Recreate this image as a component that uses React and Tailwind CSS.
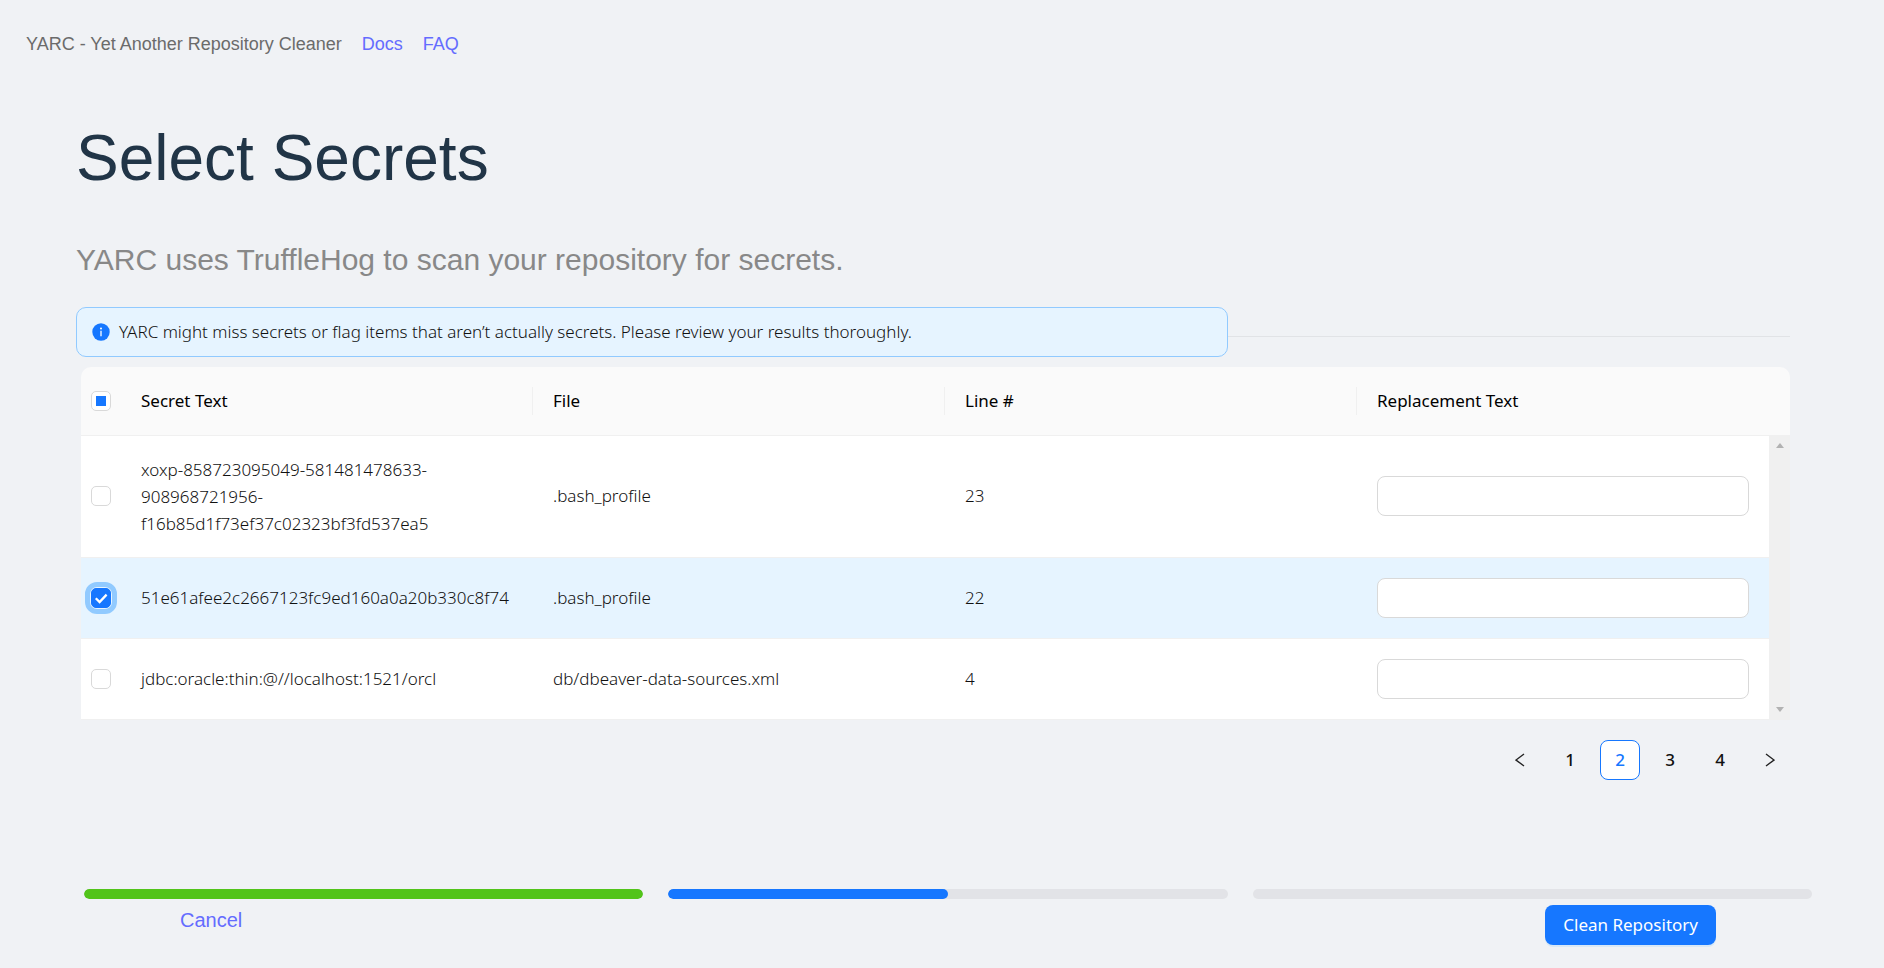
import { useState } from "react";

const rows = [
  {
    id: 1,
    secret: ["xoxp-858723095049-581481478633-", "908968721956-", "f16b85d1f73ef37c02323bf3fd537ea5"],
    file: ".bash_profile",
    line: 23,
  },
  { id: 2, secret: ["51e61afee2c2667123fc9ed160a0a20b330c8f74"], file: ".bash_profile", line: 22 },
  { id: 3, secret: ["jdbc:oracle:thin:@//localhost:1521/orcl"], file: "db/dbeaver-data-sources.xml", line: 4 },
];

const pages = [1, 2, 3, 4];

function Checkbox({ label, checked, partial, focused, onChange }) {
  return (
    <label
      className={
        "relative mx-auto block size-5 rounded-md " +
        (focused ? "outline-[5px] outline-offset-1 outline-[#91caff]" : "")
      }
    >
      <input
        type="checkbox"
        aria-label={label}
        checked={checked}
        onChange={onChange}
        className="block size-5 appearance-none rounded-[5px] border border-[#d9d9d9] bg-white outline-none checked:border-[#1677ff] checked:bg-[#1677ff]"
      />
      {partial && <span className="pointer-events-none absolute inset-[5px] bg-[#1677ff]" />}
      {checked && (
        <svg viewBox="0 0 20 20" className="pointer-events-none absolute inset-0 size-5" fill="none" stroke="#fff" strokeWidth="2.3">
          <path d="M4.8 10.2 L8.6 14 L15.6 6.6" />
        </svg>
      )}
    </label>
  );
}

function HeadCell({ children, divider }) {
  return (
    <th scope="col" className="h-[68px] border-b border-[#f0f0f0] p-0 text-left font-normal text-black">
      <div className={"flex h-7 items-center px-5 " + (divider ? "border-r border-[#f0f0f0]" : "")}>{children}</div>
    </th>
  );
}

function Arrow({ up }) {
  return (
    <button type="button" aria-label={up ? "Scroll up" : "Scroll down"} className="flex h-[21px] items-center justify-center">
      <svg width="8" height="5" viewBox="0 0 8 5" fill="#b2b2b2">
        <path d={up ? "M4 0 L8 5 H0 Z" : "M0 0 H8 L4 5 Z"} />
      </svg>
    </button>
  );
}

function Chevron({ flip }) {
  return (
    <svg width="10" height="14" viewBox="0 0 10 14" fill="none" stroke="#222" strokeWidth="1.4">
      <path d={flip ? "M1 1 L9 7 L1 13" : "M9 1 L1 7 L9 13"} />
    </svg>
  );
}

function Progress({ label, value, color }) {
  return (
    <div
      role="progressbar"
      aria-label={label}
      aria-valuenow={value}
      className="h-2.5 flex-1 overflow-hidden rounded-full bg-[#e2e3e7]"
    >
      <div className={"h-full rounded-full " + color} style={{ width: `${value}%` }} />
    </div>
  );
}

export default function App() {
  const [selected, setSelected] = useState([2]);
  const [page, setPage] = useState(2);

  const toggle = (id) =>
    setSelected((s) => (s.includes(id) ? s.filter((x) => x !== id) : [...s, id]));
  const all = selected.length === rows.length;

  return (
    <div className="min-h-screen bg-[#f0f2f5] font-['Noto_Sans',sans-serif] text-[17px] leading-6 font-light text-[#111]">
      <nav className="flex h-[88px] items-center gap-5 px-[26px] font-['Liberation_Sans',sans-serif] text-lg text-[#6b6b6b]">
        <span>YARC - Yet Another Repository Cleaner</span>
        <a href="#docs" className="text-[#646cff]">Docs</a>
        <a href="#faq" className="text-[#646cff]">FAQ</a>
      </nav>

      <main className="pr-[94px] pl-[76px]">
        <header className="font-['Liberation_Sans',sans-serif]">
          <h1 className="pt-8 text-[64px] leading-[76px] text-[#213547]">Select Secrets</h1>
          <h2 className="mt-[44px] text-[30px] leading-10 text-[#888]">
            YARC uses TruffleHog to scan your repository for secrets.
          </h2>
        </header>

        <div className="mt-[27px] flex items-center">
          <div role="alert" className="flex h-[50px] w-[1152px] items-center gap-[9px] rounded-[10px] border border-[#91caff] bg-[#e6f4ff] px-[15px]">
            <svg width="18" height="18" viewBox="0 0 18 18">
              <circle cx="9" cy="9" r="8.7" fill="#1677ff" />
              <circle cx="9" cy="5.4" r="1" fill="#fff" />
              <path d="M9 7.8 V13.2" stroke="#fff" strokeWidth="1.3" />
            </svg>
            <span>YARC might miss secrets or flag items that aren’t actually secrets. Please review your results thoroughly.</span>
          </div>
          <hr className="mt-2 flex-1 border-t border-[#e1e3e6]" />
        </div>

        <section className="mt-2.5 ml-[5px] flex">
          <div className="flex-1">
            <table className="w-full table-fixed border-collapse">
              <colgroup>
                <col className="w-10" />
                <col />
                <col />
                <col />
                <col />
              </colgroup>
              <thead>
                <tr className="bg-[#fafafa]">
                  <th scope="col" className="rounded-tl-[10px] border-b border-[#f0f0f0] p-0">
                    <Checkbox
                      label="Select all secrets"
                      checked={all}
                      partial={!all && selected.length > 0}
                      onChange={() => setSelected(all ? [] : rows.map((r) => r.id))}
                    />
                  </th>
                  <HeadCell divider>Secret Text</HeadCell>
                  <HeadCell divider>File</HeadCell>
                  <HeadCell divider>Line #</HeadCell>
                  <HeadCell>Replacement Text</HeadCell>
                </tr>
              </thead>
              <tbody>
                {rows.map((row) => {
                  const on = selected.includes(row.id);
                  return (
                    <tr key={row.id} className={on ? "bg-[#e6f4ff]" : "bg-white"}>
                      <td className="border-b border-[#f0f0f0] p-0">
                        <Checkbox
                          label={`Select secret ${row.id}`}
                          checked={on}
                          focused={on}
                          onChange={() => toggle(row.id)}
                        />
                      </td>
                      <td className="border-b border-[#f0f0f0] px-5 py-5 leading-[27px]">
                        {row.secret.map((part) => (
                          <div key={part}>{part}</div>
                        ))}
                      </td>
                      <td className="border-b border-[#f0f0f0] px-5">{row.file}</td>
                      <td className="border-b border-[#f0f0f0] px-5">{row.line}</td>
                      <td className="border-b border-[#f0f0f0] px-5 py-5">
                        <input
                          type="text"
                          aria-label={`Replacement text for secret ${row.id}`}
                          className="block h-10 w-full rounded-lg border border-[#d9d9d9] bg-white px-3 outline-none"
                        />
                      </td>
                    </tr>
                  );
                })}
              </tbody>
            </table>
          </div>
          <div className="flex w-[21px] flex-col">
            <div className="h-[68px] rounded-tr-[10px] bg-[#fafafa]" />
            <div className="flex flex-1 flex-col justify-between bg-[#f0f0f0]">
              <Arrow up />
              <Arrow />
            </div>
          </div>
        </section>

        <nav aria-label="Pagination" className="mt-5 flex justify-end gap-2.5 font-medium">
          <button type="button" aria-label="Previous page" className="flex size-10 items-center justify-center">
            <Chevron />
          </button>
          {pages.map((n) => (
            <button
              key={n}
              type="button"
              onClick={() => setPage(n)}
              className={
                "flex size-10 items-center justify-center rounded-lg border " +
                (n === page ? "border-[#1677ff] bg-white text-[#1677ff]" : "border-transparent")
              }
            >
              {n}
            </button>
          ))}
          <button type="button" aria-label="Next page" className="flex size-10 items-center justify-center">
            <Chevron flip />
          </button>
        </nav>
      </main>

      <footer className="pt-[109px] pr-[72px] pl-[84px]">
        <div className="flex gap-[25px]">
          <Progress label="Scan" value={100} color="bg-[#52c41a]" />
          <Progress label="Select" value={50} color="bg-[#1677ff]" />
          <Progress label="Clean" value={0} color="bg-transparent" />
        </div>
        <div className="mt-1.5 flex items-start justify-between px-24">
          <a href="#cancel" className="font-['Liberation_Sans',sans-serif] text-xl leading-[30px] text-[#646cff]">Cancel</a>
          <button type="button" className="h-10 rounded-lg bg-[#1677ff] px-[18px] font-normal text-white shadow-[0_2px_0_rgba(5,145,255,0.1)]">
            Clean Repository
          </button>
        </div>
      </footer>
    </div>
  );
}
